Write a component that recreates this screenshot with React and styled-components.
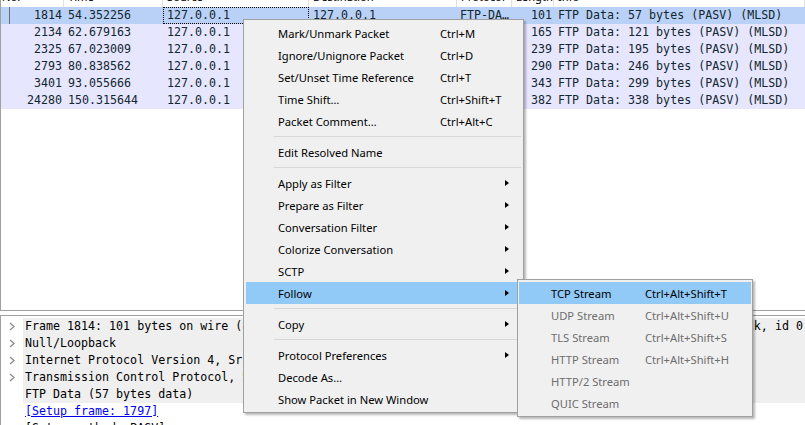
import React from 'react';
import styled, { createGlobalStyle } from 'styled-components';

const GlobalStyle = createGlobalStyle`
  html, body {
    margin: 0;
    padding: 0;
    background: #fff;
    overflow: hidden;
  }
  #root {
    width: 805px;
    height: 425px;
  }
`;

const MONO = '"DejaVu Sans Mono", "Liberation Mono", monospace';
const UI = '"Noto Sans", "Liberation Sans", sans-serif';
const COLS = '63px 99px 146px 148px 55px 42px 1fr';

const StyledApp = styled.div`
  position: relative;
  width: 805px;
  height: 425px;
  display: flex;
  flex-direction: column;
  overflow: hidden;
  font-family: ${MONO};
  font-size: 11.65px;
`;

const PacketPane = styled.div`
  flex: 0 0 311px;
  box-sizing: border-box;
  border-left: 1px solid #a0a0a0;
  border-bottom: 1px solid #a0a0a0;
  background: #fff;
`;

const HeaderRow = styled.div`
  display: grid;
  grid-template-columns: ${COLS};
  height: 7px;
  overflow: hidden;
  font-family: ${UI};
  font-size: 11.2px;
  line-height: 20px;
  color: #000;
`;

const HeaderCell = styled.div`
  display: flex;
  align-items: flex-end;
  padding-left: ${(p) => p.$pad || 4}px;
  border-right: 1px solid #e0e0e0;
  overflow: hidden;
  white-space: nowrap;
`;

const PacketRow = styled.div`
  display: grid;
  grid-template-columns: ${COLS};
  height: 17px;
  line-height: 17px;
  background: ${(p) => (p.$selected ? '#bad1f7' : '#e7e6ff')};
  color: #12272e;
  white-space: pre;
`;

const Cell = styled.div`
  box-sizing: border-box;
  overflow: hidden;
  padding: ${(p) => (p.$right ? '0 2px 0 0' : `0 0 0 ${p.$pad ?? 4}px`)};
  text-align: ${(p) => (p.$right ? 'right' : 'left')};
  outline: ${(p) => (p.$focused ? '1px dotted #000' : 'none')};
  outline-offset: -1px;
`;

const NumberCell = styled.div`
  display: flex;
  justify-content: space-between;
  padding-right: 2px;
`;

const RelatedMark = styled.span`
  width: 1px;
  margin-left: 8px;
  background: ${(p) => (p.$on ? '#6f6f6f' : 'transparent')};
`;

const Splitter = styled.div`
  flex: 0 0 4px;
  background: #fff;
`;

const DetailPane = styled.div`
  flex: 1;
  box-sizing: border-box;
  border-top: 1px solid #a0a0a0;
  border-left: 1px solid #a0a0a0;
  padding-top: 2px;
  overflow: hidden;
  color: #000;
`;

const DetailRow = styled.div`
  display: grid;
  grid-template-columns: 22px 1fr;
  height: 17px;
  line-height: 17px;
`;

const Expander = styled.div`
  display: flex;
  align-items: center;
  padding-left: 8px;
`;

const DetailText = styled.div`
  padding-left: 2px;
  white-space: pre;
  overflow: hidden;
  background: ${(p) => (p.$shaded ? '#efefef' : 'transparent')};
`;

const LinkText = styled.span`
  color: #0000ee;
  text-decoration: underline;
`;

const Menu = styled.div`
  position: absolute;
  left: ${(p) => p.$left}px;
  top: ${(p) => p.$top}px;
  width: ${(p) => p.$width}px;
  box-sizing: border-box;
  padding: 2px ${(p) => p.$inset}px;
  background: #f0f0f0;
  border: 1px solid #a0a0a0;
  box-shadow: 2px 2px 2px rgba(0, 0, 0, 0.28);
  font-family: ${UI};
  font-size: 11.2px;
  color: #000;
`;

const MenuItem = styled.div`
  display: grid;
  grid-template-columns: ${(p) => p.$labelWidth}px 1fr 16px;
  align-items: center;
  height: 22px;
  padding-left: 32px;
  padding-right: 12px;
  white-space: nowrap;
  background: ${(p) => (p.$active ? '#91c9f7' : 'transparent')};
  color: ${(p) => (p.$disabled ? '#6d6d6d' : '#000')};
`;

const Arrow = styled.span`
  justify-self: end;
  width: 0;
  height: 0;
  border-left: 4px solid #000;
  border-top: 3.5px solid transparent;
  border-bottom: 3.5px solid transparent;
`;

const Separator = styled.div`
  height: 9px;
  display: flex;
  align-items: center;
  padding-left: 28px;
  &::after {
    content: '';
    flex: 1;
    height: 1px;
    background: #d7d7d7;
  }
`;

const packets = [
  ['1814', '54.352256', '101', '57'],
  ['2134', '62.679163', '165', '121'],
  ['2325', '67.023009', '239', '195'],
  ['2793', '80.838562', '290', '246'],
  ['3401', '93.055666', '343', '299'],
  ['24280', '150.315644', '382', '338'],
];

const headers = ['No.', 'Time', 'Source', 'Destination', 'Protocol', 'Length', 'Info'];

const details = [
  { arrow: true, text: 'Frame 1814: 101 bytes on wire (808 bits), 101 bytes captured (808 bits) on interface \\Device\\NPF_Loopback, id 0' },
  { arrow: true, text: 'Null/Loopback' },
  { arrow: true, text: 'Internet Protocol Version 4, Src: 127.0.0.1, Dst: 127.0.0.1' },
  { arrow: true, text: 'Transmission Control Protocol, Src Port: 50553, Dst Port: 50552, Seq: 1, Ack: 1, Len: 57' },
  { text: 'FTP Data (57 bytes data)' },
  { link: true, text: '[Setup frame: 1797]' },
  { plain: true, text: '[Setup method: PASV]' },
];

const mainMenu = [
  { label: 'Mark/Unmark Packet', key: 'Ctrl+M' },
  { label: 'Ignore/Unignore Packet', key: 'Ctrl+D' },
  { label: 'Set/Unset Time Reference', key: 'Ctrl+T' },
  { label: 'Time Shift…', key: 'Ctrl+Shift+T' },
  { label: 'Packet Comment…', key: 'Ctrl+Alt+C' },
  'sep',
  { label: 'Edit Resolved Name' },
  'sep',
  { label: 'Apply as Filter', sub: true },
  { label: 'Prepare as Filter', sub: true },
  { label: 'Conversation Filter', sub: true },
  { label: 'Colorize Conversation', sub: true },
  { label: 'SCTP', sub: true },
  { label: 'Follow', sub: true, active: true },
  'sep',
  { label: 'Copy', sub: true },
  'sep',
  { label: 'Protocol Preferences', sub: true },
  { label: 'Decode As…' },
  { label: 'Show Packet in New Window' },
];

const followMenu = [
  { label: 'TCP Stream', key: 'Ctrl+Alt+Shift+T', active: true },
  { label: 'UDP Stream', key: 'Ctrl+Alt+Shift+U', disabled: true },
  { label: 'TLS Stream', key: 'Ctrl+Alt+Shift+S', disabled: true },
  { label: 'HTTP Stream', key: 'Ctrl+Alt+Shift+H', disabled: true },
  { label: 'HTTP/2 Stream', disabled: true },
  { label: 'QUIC Stream', disabled: true },
];

const Chevron = () => (
  <svg width="6" height="9" viewBox="0 0 6 9">
    <polyline points="1,1 5,4.5 1,8" fill="none" stroke="#8c8c8c" strokeWidth="1.3" />
  </svg>
);

const MenuList = ({ items, labelWidth }) =>
  items.map((item, i) =>
    item === 'sep' ? (
      <Separator key={i} />
    ) : (
      <MenuItem key={i} $labelWidth={labelWidth} $active={item.active} $disabled={item.disabled}>
        <span>{item.label}</span>
        <span>{item.key || ''}</span>
        {item.sub ? <Arrow /> : <span />}
      </MenuItem>
    )
  );

export default function App() {
  return (
    <>
      <GlobalStyle />
      <StyledApp>
        <PacketPane>
          <HeaderRow>
            {headers.map((h, i) => (
              <HeaderCell key={h} $pad={i === 0 ? 1 : 4}>{h}</HeaderCell>
            ))}
          </HeaderRow>
          {packets.map(([no, time, len, bytes], i) => (
            <PacketRow key={no} $selected={i === 0}>
              <NumberCell>
                <RelatedMark $on={i === 0} />
                <span>{no}</span>
              </NumberCell>
              <Cell>{time}</Cell>
              <Cell $focused={i === 0}>127.0.0.1</Cell>
              <Cell>127.0.0.1</Cell>
              <Cell $pad={3}>FTP-DA…</Cell>
              <Cell $right>{len}</Cell>
              <Cell>{`FTP Data: ${bytes} bytes (PASV) (MLSD)`}</Cell>
            </PacketRow>
          ))}
        </PacketPane>
        <Splitter />
        <DetailPane>
          {details.map((d, i) => (
            <DetailRow key={i}>
              <Expander>{d.arrow && <Chevron />}</Expander>
              <DetailText $shaded={!d.link && !d.plain}>
                {d.link ? <LinkText>{d.text}</LinkText> : d.text}
              </DetailText>
            </DetailRow>
          ))}
        </DetailPane>

        <Menu $left={243} $top={19} $width={281} $inset={2}>
          <MenuList items={mainMenu} labelWidth={162} />
        </Menu>
        <Menu $left={517} $top={279} $width={236} $inset={1}>
          <MenuList items={followMenu} labelWidth={94} />
        </Menu>
      </StyledApp>
    </>
  );
}
